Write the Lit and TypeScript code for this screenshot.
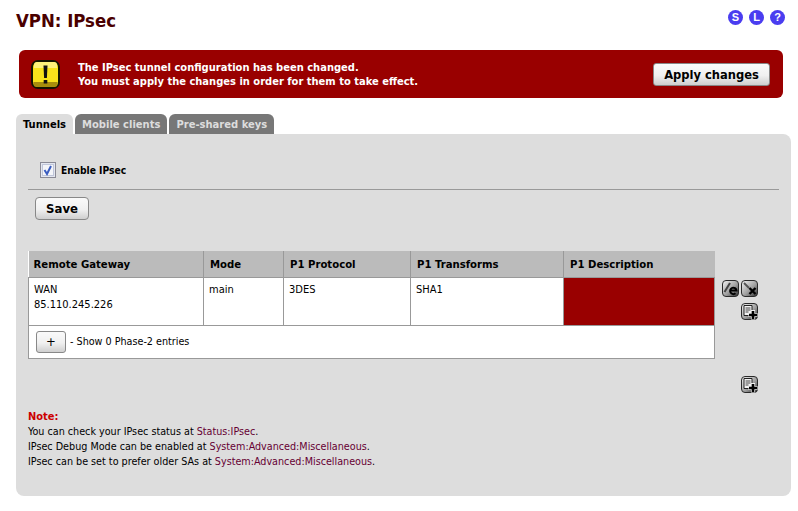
import { LitElement, html, css } from "lit";
import { customElement } from "lit/decorators.js";

const addIcon = html`<svg class="ico" viewBox="0 0 17 17" width="17" height="17"><rect x="0.5" y="0.5" width="16" height="16" rx="3.5" fill="url(#g1)" stroke="#2a2a2a"/><path d="M3 2.500h8v10H3z" fill="#f2f2f2" stroke="#222"/><path d="M4.500 5h5M4.500 7h5M4.500 9h3" stroke="#444" stroke-width="1"/><path d="M12 7v9.500M7.500 12h9" stroke="#eee" stroke-width="4.200"/><path d="M12 8v8M8 12h8" stroke="#000" stroke-width="2.600"/></svg>`;

@customElement("app-root")
export class AppRoot extends LitElement {
  static styles = css`
    :host { display: block; width: 798px; height: 511px; overflow: hidden; background: #fff; font-family: "DejaVu Sans Condensed", "DejaVu Sans", sans-serif; font-size: 11px; color: #000; }
    .page { display: flex; flex-direction: column; padding: 10px 7px 0 16px; }
    .top { display: flex; justify-content: space-between; align-items: flex-start; height: 40px; }
    h1 { margin: 0; font-size: 18.4px; line-height: 22px; font-weight: 700; color: #4a0000; }
    .help { display: flex; gap: 6px; padding-right: 6px; }
    .dot { width: 15px; height: 15px; border-radius: 50%; background: #4a3df0; color: #fff; font: 700 11px/15px "Liberation Sans", sans-serif; text-align: center; }
    .alert { display: flex; align-items: center; height: 48px; margin: 0 8px 0 3px; padding: 0 13px 0 12px; border-radius: 6px; background: #990000; color: #fff; font-weight: 700; font-size: 11.05px; line-height: 14px; box-sizing: border-box; }
    .warn { width: 29px; height: 29px; margin-right: 18px; flex: none; }
    .msg { flex: 1; padding-top: 2px; }
    button { font-family: inherit; font-weight: 700; color: #000; border: 1px solid #888; border-radius: 3px; background: linear-gradient(#fafafa, #f0f0f0 55%, #cfcfcf); padding: 0; box-sizing: border-box; }
    .apply { width: 117px; height: 23px; font-size: 12.8px; }
    .tabs { display: flex; gap: 2px; margin-top: 16px; height: 20px; }
    .tab { padding: 0 7px; background: #777; color: #ddd; font-weight: 700; font-size: 11.1px; line-height: 21px; border-radius: 6px 6px 0 0; }
    .tab.on { background: #dddddd; color: #000; }
    .panel { display: flex; flex-direction: column; background: #dddddd; height: 362px; border-radius: 0 8px 8px 8px; padding: 0 12px; box-sizing: border-box; }
    .enable { display: flex; align-items: center; gap: 5px; height: 56px; padding: 17px 0 0 12px; box-sizing: border-box; font-weight: 700; font-size: 10.2px; border-bottom: 1px solid #999; }
    .cb { width: 16px; height: 16px; display: block; flex: none; }
    .save { width: 54px; height: 23px; margin: 7px 0 0 7px; font-size: 13px; align-self: flex-start; border-radius: 4px; }
    .grid { display: flex; margin-top: 31px; }
    table { width: 686px; border-collapse: collapse; table-layout: fixed; background: #fff; flex: none; }
    th { height: 26px; background: #bbbbbb; text-align: left; font-weight: 700; font-size: 11.25px; padding: 1px 6px 0; border: 0; border-right: 1px solid #999; border-bottom: 1px solid #999; box-sizing: border-box; }
    th:first-child { padding-left: 5px; }
    th:last-child { border-right: 0; }
    td { height: 48px; vertical-align: top; padding: 4px 5px 0; line-height: 15px; border: 1px solid #999; box-sizing: border-box; }
    td.red { background: #990000; }
    td.foot { height: 33px; padding: 0 0 0 7px; vertical-align: middle; }
    .foot-in { display: flex; align-items: center; gap: 4px; font-size: 10.7px; }
    .plus { width: 30px; height: 22px; font-size: 13px; font-weight: 400; border-radius: 3px; }
    .side { display: flex; flex-direction: column; align-items: flex-start; padding: 29px 0 0 7px; gap: 6px; }
    .side-row { display: flex; gap: 2px; }
    .side-add { margin-left: 19px; }
    .ico { display: block; }
    .global { display: flex; justify-content: flex-end; padding-right: 21px; margin-top: 17px; }
    .notes { margin-top: 16px; line-height: 15px; font-size: 10.7px; color: #000; }
    .note { color: #cc0000; font-weight: 700; font-size: 11px; }
    a { color: #660033; text-decoration: none; }
  `;

  render() {
    return html`<div class="page">
      <svg width="0" height="0" style="position:absolute"><defs><linearGradient id="g1" x1="0" y1="0" x2="1" y2="1"><stop offset="0" stop-color="#f6f6f6"/><stop offset="0.55" stop-color="#a0a0a0"/><stop offset="1" stop-color="#2c2c2c"/></linearGradient></defs></svg>
      <div class="top">
        <h1>VPN: IPsec</h1>
        <div class="help"><div class="dot">S</div><div class="dot">L</div><div class="dot">?</div></div>
      </div>
      <div class="alert">
        <svg class="warn" viewBox="0 0 29 29"><rect x="1" y="1" width="27" height="27" rx="6" fill="#f7e21b" stroke="#141400" stroke-width="2"/><path d="M3 5a3 3 0 0 1 3-3h17a3 3 0 0 1 3 3v3H3z" fill="#fdf17a"/><path d="M2.500 22h24v2a3 3 0 0 1-3 3H5.500a3 3 0 0 1-3-3z" fill="#a88e0c"/><path d="M12.500 5.500h4l-.6 12.500h-2.800z" fill="#111"/><rect x="12.700" y="20" width="3.600" height="3.500" fill="#111"/></svg>
        <div class="msg">The IPsec tunnel configuration has been changed.<br />You must apply the changes in order for them to take effect.</div>
        <button class="apply">Apply changes</button>
      </div>
      <div class="tabs">
        <div class="tab on">Tunnels</div>
        <div class="tab">Mobile clients</div>
        <div class="tab">Pre-shared keys</div>
      </div>
      <div class="panel">
        <div class="enable">
          <svg class="cb" viewBox="0 0 16 16"><rect x="0.5" y="0.5" width="15" height="15" fill="#e4e7f0" stroke="#8a8a96"/><rect x="2.500" y="2.500" width="11" height="11" fill="#f4f5f9" stroke="#c0c6da"/><path d="M4.500 8l2.500 4 4-8" fill="none" stroke="#3a5cc0" stroke-width="2"/></svg>
          <span>Enable IPsec</span>
        </div>
        <button class="save">Save</button>
        <div class="grid">
          <table>
            <colgroup><col style="width:175px" /><col style="width:80px" /><col style="width:127px" /><col style="width:153px" /><col style="width:151px" /></colgroup>
            <tr><th>Remote Gateway</th><th>Mode</th><th>P1 Protocol</th><th>P1 Transforms</th><th>P1 Description</th></tr>
            <tr><td>WAN<br />85.110.245.226</td><td>main</td><td>3DES</td><td>SHA1</td><td class="red"></td></tr>
            <tr><td class="foot" colspan="5"><div class="foot-in"><button class="plus">+</button><span>- Show 0 Phase-2 entries</span></div></td></tr>
          </table>
          <div class="side">
            <div class="side-row">
              <svg class="ico" viewBox="0 0 17 17" width="17" height="17"><rect x="0.5" y="0.5" width="16" height="16" rx="3.5" fill="url(#g1)" stroke="#2a2a2a"/><path d="M2.500 12L8 3" stroke="#444" stroke-width="2"/><path d="M8.500 10.500h6a3.200 3.200 0 1 0-1 2.800" fill="none" stroke="#000" stroke-width="2"/></svg>
              <svg class="ico" viewBox="0 0 17 17" width="17" height="17"><rect x="0.5" y="0.5" width="16" height="16" rx="3.5" fill="url(#g1)" stroke="#2a2a2a"/><path d="M3 3l5 5" stroke="#555" stroke-width="2"/><path d="M8.500 8l6 6M14.500 8l-6 6" stroke="#000" stroke-width="2.400"/></svg>
            </div>
            <div class="side-add">${addIcon}</div>
          </div>
        </div>
        <div class="global">${addIcon}</div>
        <div class="notes">
          <div class="note">Note:</div>
          <div>You can check your IPsec status at <a>Status:IPsec</a>.</div>
          <div>IPsec Debug Mode can be enabled at <a>System:Advanced:Miscellaneous</a>.</div>
          <div>IPsec can be set to prefer older SAs at <a>System:Advanced:Miscellaneous</a>.</div>
        </div>
      </div>
    </div>`;
  }
}
